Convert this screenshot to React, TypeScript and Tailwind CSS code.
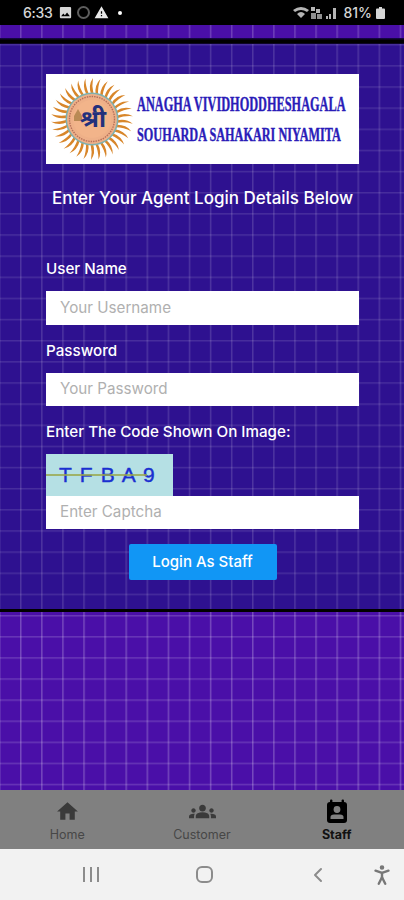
import React from "react";
import { ChevronLeft, PersonStanding } from "lucide-react";
import { MdHome, MdGroups, MdImage, MdWarning } from "react-icons/md";

const gridDark =
  "bg-[#2e1190] bg-[linear-gradient(rgba(255,255,255,0.12)_0,rgba(255,255,255,0.12)_1px,transparent_2px),linear-gradient(90deg,rgba(255,255,255,0.15)_0,rgba(255,255,255,0.15)_1px,transparent_2px)] bg-[size:21.1px_21.15px] bg-[position:20px_0px]";
const gridLight =
  "bg-[#4a0fa8] bg-[linear-gradient(rgba(255,255,255,0.17)_0,rgba(255,255,255,0.17)_1px,transparent_2px),linear-gradient(90deg,rgba(255,255,255,0.24)_0,rgba(255,255,255,0.24)_1px,transparent_2px)] bg-[size:21.1px_21.1px] bg-[position:20px_3px]";
const stripLight =
  "bg-[#4a0fa8] bg-[linear-gradient(90deg,rgba(255,255,255,0.2)_0,rgba(255,255,255,0.2)_1px,transparent_2px)] bg-[size:21.1px_21.1px] bg-[position:20px_0px]";

function Sun() {
  const rays = Array.from({ length: 34 }, (_, i) => (i * 360) / 34);
  return (
    <svg viewBox="0 0 84 84" className="h-[84px] w-[84px] shrink-0">
      {rays.map((r) => (
        <path
          key={r}
          d="M43 1 Q38 8 41 17 L43.5 17 Q41.5 9 43 1Z"
          fill="#d8862a"
          transform={`rotate(${r} 42 42)`}
        />
      ))}
      <circle cx="42" cy="42" r="26.5" fill="#7fb0ad" />
      <circle cx="42" cy="42" r="25" fill="#eeb088" />
      <circle cx="42" cy="42" r="22.5" fill="none" stroke="#b5705a" strokeWidth="1.4" strokeDasharray="1.5 1" />
      <circle cx="42" cy="42" r="19" fill="#f2b48a" />
      <path d="M24 39 L28 32 L32 39 L32 44 L24 44Z" fill="#b98a55" />
      <text x="43" y="50" textAnchor="middle" fontSize="24" fontWeight="700" fill="#22307c" fontFamily="'Noto Sans', sans-serif">
        श्री
      </text>
    </svg>
  );
}

function Field({ placeholder, tall }: { placeholder: string; tall?: boolean }) {
  return (
    <div className={`flex items-center bg-white pl-[14px] text-[15.2px] text-[#b0b0b0] ${tall ? "h-[34px]" : "h-[33px]"}`}>
      {placeholder}
    </div>
  );
}

function NavItem({ icon, label, active }: { icon: React.ReactNode; label: string; active?: boolean }) {
  return (
    <div className={`flex flex-1 flex-col items-center ${active ? "font-bold text-[#111]" : "text-[#474747]"}`}>
      <div className="flex h-[27px] items-center justify-center">{icon}</div>
      <span className="mt-[2px] text-[12.5px] leading-[16px]">{label}</span>
    </div>
  );
}

function StaffIcon() {
  return (
    <svg viewBox="0 0 22 25" className="h-[25px] w-[22px]">
      <rect x="1" y="3" width="20" height="21" rx="3" fill="#000" />
      <rect x="4" y="0.5" width="2.4" height="5" rx="1" fill="#000" />
      <rect x="15.6" y="0.5" width="2.4" height="5" rx="1" fill="#000" />
      <circle cx="11" cy="10.5" r="3.4" fill="#808080" />
      <path d="M4.5 20 V18 Q4.5 15.5 8 15.5 H14 Q17.5 15.5 17.5 18 V20Z" fill="#808080" />
    </svg>
  );
}

export default function App() {
  return (
    <div className="flex h-[900px] w-[404px] flex-col overflow-hidden bg-black font-['Inter',sans-serif] text-white">
      {/* status bar */}
      <div className="flex h-[25px] shrink-0 items-center justify-between pl-[23px] pr-[19px] text-[#d6d6d6]">
        <div className="flex items-center">
          <span className="text-[14px] font-medium tracking-[-0.3px]">6:33</span>
          <MdImage size={15} className="ml-[6px]" />
          <span className="ml-[4px] h-[13px] w-[13px] rounded-full border-[2.5px] border-[#5e5e5e]" />
          <MdWarning size={15} className="ml-[4px] text-[#e8e8e8]" />
          <span className="ml-[9px] h-[4px] w-[4px] rounded-full bg-white" />
        </div>
        <div className="flex items-center gap-[4px]">
          <svg viewBox="0 0 46 14" className="h-[14px] w-[46px]" fill="#b5b5b5">
            <path d="M0 4 Q8 -2 16 4 L14 6 Q8 2 2 6Z" />
            <path d="M4 8 Q8 4 12 8 L8 12Z" />
            <rect x="18" y="1" width="4" height="4" />
            <rect x="23" y="3" width="4" height="4" />
            <rect x="18" y="7" width="5" height="6" opacity="0.8" />
            <rect x="24" y="8" width="5" height="5" opacity="0.8" />
            <rect x="33" y="10" width="2" height="3" />
            <rect x="36" y="8" width="2" height="5" />
            <rect x="40" y="2" width="3" height="11" />
          </svg>
          <span className="text-[14px] font-medium">81%</span>
          <svg viewBox="0 0 9 12" className="h-[12px] w-[9px]" fill="#d6d6d6">
            <path d="M3 0 H6 V1.5 H8 Q9 1.5 9 2.5 V11 Q9 12 8 12 H1 Q0 12 0 11 V2.5 Q0 1.5 1 1.5 H3Z" />
          </svg>
        </div>
      </div>

      {/* top strip */}
      <div className={`h-[13px] shrink-0 ${stripLight}`} />
      <div className="h-[6px] shrink-0 bg-[linear-gradient(#1a0850,#000_40%,#000_80%,#14083f)]" />

      {/* login panel */}
      <div className={`h-[568px] shrink-0 border-b-[3px] border-black pl-[46px] pr-[45px] pt-[30px] ${gridDark}`}>
        <div className="flex h-[90px] items-center overflow-hidden bg-white pl-[4px]">
          <Sun />
          <div className="ml-[3px] flex flex-col font-['Liberation_Serif',serif] font-bold text-[#2a1cb8] [-webkit-text-stroke:0.4px_#2a1cb8]">
            <span className="origin-left scale-x-[0.615] whitespace-nowrap text-[20px] leading-[24px]">ANAGHA VIVIDHODDHESHAGALA</span>
            <span className="mt-[7px] origin-left scale-x-[0.644] whitespace-nowrap text-[19px] leading-[24px]">SOUHARDA SAHAKARI NIYAMITA</span>
          </div>
        </div>

        <p className="mt-[22px] whitespace-nowrap text-center text-[17px] font-medium leading-[24px]">Enter Your Agent Login Details Below</p>

        <label className="mt-[48px] block text-[15.2px] font-medium leading-[22px]">User Name</label>
        <div className="mt-[11px]">
          <Field placeholder="Your Username" tall />
        </div>
        <label className="mt-[15px] block text-[15.2px] font-medium leading-[22px]">Password</label>
        <div className="mt-[11px]">
          <Field placeholder="Your Password" />
        </div>
        <label className="mt-[15px] block text-[15.2px] font-medium leading-[22px]">Enter The Code Shown On Image:</label>
        <div className="relative mt-[11px] flex h-[42px] w-[127px] items-center whitespace-nowrap bg-[#b5e0e4] pl-[13px] font-['Liberation_Sans',sans-serif] text-[21px] tracking-[1.2px] text-[#1a2fd0] [-webkit-text-stroke:0.4px_#1a2fd0]">
          T F B A 9
          <span className="absolute left-0 right-[26px] top-[20px] h-[2px] bg-[#9aa84a]/80" />
        </div>
        <Field placeholder="Enter Captcha" />
        <div className="mt-[15px] flex justify-center">
          <button className="flex h-[36px] w-[148px] items-center justify-center rounded-[2px] bg-[#1196f5] pt-[1px] text-[15px] font-medium">
            Login As Staff
          </button>
        </div>
      </div>

      {/* lower background */}
      <div className={`h-[178px] shrink-0 ${gridLight}`} />

      {/* tab bar */}
      <div className="flex h-[59px] shrink-0 items-start bg-[#808080] pt-[8px]">
        <NavItem icon={<MdHome size={25} className="text-[#3a3a3a]" />} label="Home" />
        <NavItem icon={<MdGroups size={27} className="text-[#3a3a3a]" />} label="Customer" />
        <NavItem icon={<StaffIcon />} label="Staff" active />
      </div>

      {/* android nav */}
      <div className="flex h-[51px] shrink-0 items-center bg-[#f2f2f2] pl-[83px]">
        <div className="flex gap-[5px]">
          <span className="h-[15px] w-[2px] bg-[#8c8c8c]" />
          <span className="h-[15px] w-[2px] bg-[#8c8c8c]" />
          <span className="h-[15px] w-[2px] bg-[#8c8c8c]" />
        </div>
        <span className="ml-[97px] h-[17px] w-[17px] rounded-[6px] border-2 border-[#8c8c8c]" />
        <ChevronLeft size={24} strokeWidth={2} className="ml-[93px] text-[#8c8c8c]" />
        <PersonStanding size={26} strokeWidth={2.2} className="ml-[39px] text-[#777]" />
      </div>
    </div>
  );
}
